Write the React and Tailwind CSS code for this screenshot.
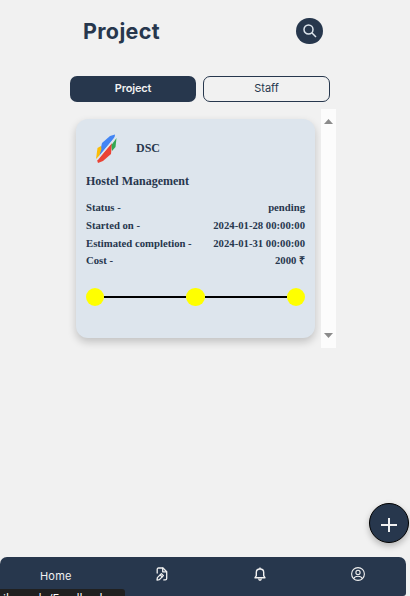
import React from "react";

const ROWS = [
  ["Status -", "pending"],
  ["Started on -", "2024-01-28 00:00:00"],
  ["Estimated completion -", "2024-01-31 00:00:00"],
  ["Cost -", "2000 ₹"],
];

function Logo() {
  return (
    <svg width="24" height="30" viewBox="0 0 24 30" className="shrink-0">
      <path d="M20 0.5L19.5 4L4 22L7 9L15 2Z" fill="#4285f4" />
      <path d="M1 25L2.5 14L6 12L6.5 15L4 22Z" fill="#fbbc05" />
      <path d="M3 29L2 26L17 9L16 20L8 27Z" fill="#ea4335" />
      <path d="M21.5 4L20.5 13L17 17L16.5 11Z" fill="#34a853" />
      <path d="M21.5 2L2 26" stroke="#dde5ed" strokeWidth="1.3" />
    </svg>
  );
}

function ProjectCard() {
  return (
    <section className="ml-[5.5px] mt-[10px] h-[219px] w-[239.5px] rounded-[12px] bg-[#dde5ed] pl-[10.5px] pr-[10px] pt-[15px] font-['Liberation_Serif',serif] font-bold text-[#27374d] shadow-[0_4px_8px_rgba(0,0,0,0.2)]">
      <div className="flex h-[30px] items-center pl-[9px]">
        <Logo />
        <span className="ml-[17px] pb-[2px] text-[12px] font-bold">DSC</span>
      </div>
      <h2 className="mt-[7px] text-[12px] leading-[20px]">Hostel Management</h2>
      <div className="mt-[8px]">
        {ROWS.map(([label, value]) => (
          <div key={label} className="flex h-[17.7px] items-center justify-between text-[10.7px] leading-[17px]">
            <span>{label}</span>
            <span>{value}</span>
          </div>
        ))}
      </div>
      <div className="mt-[18px] flex items-center">
        <span className="size-[18px] rounded-full bg-[#ffff00]" />
        <span className="h-[2px] flex-1 bg-black" />
        <span className="h-[18px] w-[19px] rounded-full bg-[#ffff00]" />
        <span className="h-[2px] flex-1 bg-black" />
        <span className="size-[18px] rounded-full bg-[#ffff00]" />
      </div>
    </section>
  );
}

function EditFileIcon() {
  return (
    <svg width="12" height="14" viewBox="0 0 12 14" fill="none" stroke="#f1f1f1" strokeWidth="1.3" strokeLinecap="round" strokeLinejoin="round">
      <path d="M1.2 6V2.4Q1.2 1 2.6 1H7L10.7 4.7V11.5Q10.7 12.9 9.3 12.9H7.8" />
      <path d="M6.7 1.2V4.8H10.5" />
      <path d="M1 13L1.4 10.6L5.4 6.6L7.4 8.6L3.4 12.6Z" />
      <path d="M4.3 8L6 9.7" />
    </svg>
  );
}

function BellIcon() {
  return (
    <svg width="12" height="14" viewBox="0 0 12 14" fill="none" stroke="#f1f1f1" strokeWidth="1.4" strokeLinejoin="round">
      <path d="M1 10.8H11L9.7 8.7V5.5Q9.7 2 6 2Q2.3 2 2.3 5.5V8.7Z" />
      <path d="M6 .5V2M4.7 11.5Q4.8 13.2 6 13.2Q7.2 13.2 7.3 11.5" />
    </svg>
  );
}

function UserIcon() {
  return (
    <svg width="14" height="14" viewBox="0 0 14 14" fill="none" stroke="#f1f1f1" strokeWidth="1.1">
      <circle cx="7" cy="7" r="6.4" />
      <circle cx="7" cy="5.4" r="2.1" />
      <path d="M2.8 11.7Q3.6 9.2 7 9.2Q10.4 9.2 11.2 11.7" />
    </svg>
  );
}

export default function App() {
  return (
    <main className="relative flex h-[596px] w-[410px] flex-col overflow-hidden bg-[#f1f1f1] font-['Inter',sans-serif] text-[#27374d]">
      <header className="flex h-[76px] justify-between pl-[83px] pr-[87px] pt-[17.5px]">
        <h1 className="mt-[-3px] text-[21.5px] font-bold leading-[32px] tracking-[0.35px]">Project</h1>
        <button className="flex h-[26px] w-[27px] items-center justify-center rounded-full bg-[#27374d]">
          <svg width="14" height="14" viewBox="0 0 14 14" fill="none" stroke="#dde5ed" strokeWidth="1.5">
            <circle cx="5.5" cy="5.5" r="4.5" />
            <path d="M8.8 8.8L13 13" />
          </svg>
        </button>
      </header>
      <div className="ml-[70px] flex h-[26px] w-[260px] gap-[7px] text-[11px]">
        <button className="w-[126px] rounded-[7px] bg-[#27374d] pb-[1px] font-semibold tracking-[-0.15px] text-[#f1f1f1]">Project</button>
        <button className="w-[127px] rounded-[7px] border border-[#27374d] pb-[1px]">Staff</button>
      </div>
      <div className="ml-[70px] mt-[7px] flex h-[239px] w-[266px] justify-between">
        <ProjectCard />
        <div className="flex w-[15px] flex-col items-center justify-between bg-[#fcfcfc] py-[10px]">
          <svg width="9" height="5" viewBox="0 0 9 5"><path d="M4.5 0L9 5H0Z" fill="#8b8b8b" /></svg>
          <svg width="9" height="5" viewBox="0 0 9 5"><path d="M4.5 5L9 0H0Z" fill="#8b8b8b" /></svg>
        </div>
      </div>
      <nav className="mt-auto flex h-[39px] w-[406px] items-start rounded-t-[7px] rounded-br-[3px] bg-[#27374d] text-[#f1f1f1]">
        <span className="ml-[40px] mt-[11px] w-[116px] text-[11px] leading-[16px] tracking-[0.2px]">Home</span>
        <span className="mt-[10px] w-[98px]"><EditFileIcon /></span>
        <span className="mt-[10px] w-[97px]"><BellIcon /></span>
        <span className="mt-[10px]"><UserIcon /></span>
      </nav>
      <button className="absolute left-[369px] top-[503px] flex size-[40px] items-center justify-center rounded-full border border-black bg-[#27374d] shadow-[0_3px_6px_rgba(0,0,0,0.25)]">
        <svg width="16" height="16" viewBox="0 0 16 16" className="mt-[3px]"><path d="M8 1V15M0 8H16" stroke="#f1f1f1" strokeWidth="2" /></svg>
      </button>
      <div className="absolute left-0 top-[589px] h-[7px] w-[125px] overflow-hidden rounded-tr-[3px] bg-[#202020] pl-[3px] pt-[4px] font-['Open_Sans',sans-serif] text-[12px] leading-[12px] text-white">
        ilemode/Feedback...
      </div>
    </main>
  );
}
